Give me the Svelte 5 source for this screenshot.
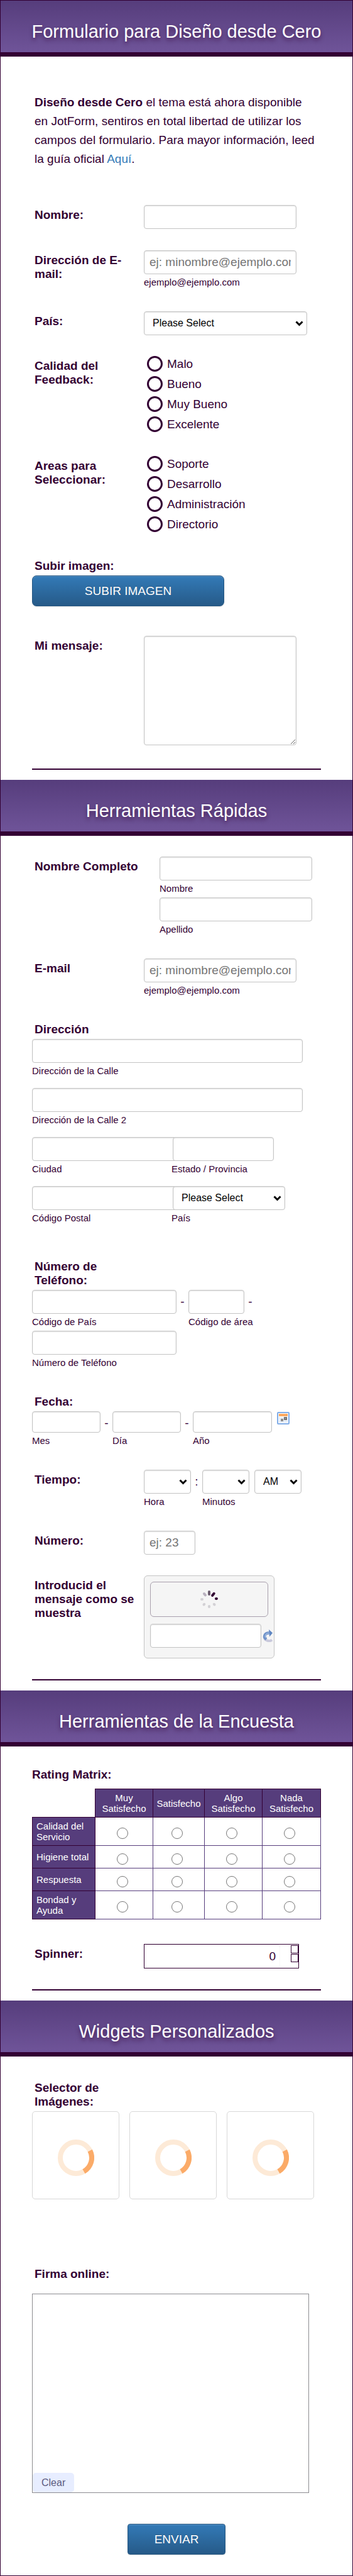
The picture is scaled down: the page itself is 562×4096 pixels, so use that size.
<script>
  const feedback = ['Malo', 'Bueno', 'Muy Bueno', 'Excelente'];
  const areas = ['Soporte', 'Desarrollo', 'Administración', 'Directorio'];
  const ratings = ['Muy Satisfecho', 'Satisfecho', 'Algo Satisfecho', 'Nada Satisfecho'];
  const services = ['Calidad del Servicio', 'Higiene total', 'Respuesta', 'Bondad y Ayuda'];
  const images = [1, 2, 3];
  const petals = [
    { angle: 0, color: '#6b5c6e', length: 8 },
    { angle: 40, color: '#330033', length: 8 },
    { angle: 85, color: '#330033', length: 5 },
    { angle: 135, color: '#d3d1d5', length: 5 },
    { angle: 180, color: '#d3d1d5', length: 5 },
    { angle: 225, color: '#d3d1d5', length: 5 },
    { angle: 270, color: '#d3d1d5', length: 5 },
    { angle: 318, color: '#b9b1bf', length: 7 }
  ];
  let spinner = $state(0);
</script>

<form class="form" onsubmit={(e) => e.preventDefault()}>
  <header class="banner"><h1>Formulario para Diseño desde Cero</h1></header>
  <section class="body">
    <p class="intro">
      <strong>Diseño desde Cero</strong> el tema está ahora disponible en JotForm, sentiros en total
      libertad de utilizar los campos del formulario. Para mayor información, leed la guía oficial
      <a href="#guia">Aquí</a>.
    </p>

    <div class="row first">
      <label class="label" for="nombre">Nombre:</label>
      <input class="box text" id="nombre" type="text" />
    </div>

    <div class="row near">
      <label class="label" for="email">Dirección de E-mail:</label>
      <div>
        <input class="box text" id="email" type="email" placeholder="ej: minombre@ejemplo.com" />
        <span class="sub">ejemplo@ejemplo.com</span>
      </div>
    </div>

    <div class="row">
      <label class="label" for="pais">País:</label>
      <select class="box country" id="pais"><option>Please Select</option></select>
    </div>

    <div class="row tight" role="radiogroup" aria-labelledby="calidad">
      <span class="label" id="calidad">Calidad del Feedback:</span>
      <div class="options">
        {#each feedback as option}
          <label><input class="ring" type="radio" name="calidad" value={option} />{option}</label>
        {/each}
      </div>
    </div>

    <div class="row" role="radiogroup" aria-labelledby="areas">
      <span class="label" id="areas">Areas para Seleccionar:</span>
      <div class="options">
        {#each areas as option}
          <label><input class="ring" type="radio" name="areas" value={option} />{option}</label>
        {/each}
      </div>
    </div>

    <div class="stack">
      <span class="label" id="subir">Subir imagen:</span>
      <button class="button upload" type="button" aria-describedby="subir">SUBIR IMAGEN</button>
    </div>

    <div class="row far">
      <label class="label" for="mensaje">Mi mensaje:</label>
      <textarea class="box message" id="mensaje"></textarea>
    </div>
    <hr />
  </section>

  <header class="banner"><h2>Herramientas Rápidas</h2></header>
  <section class="body">
    <div class="row tight" role="group" aria-labelledby="completo">
      <span class="label wide" id="completo">Nombre Completo</span>
      <div class="column indented">
        <div>
          <input class="box text" id="first" type="text" />
          <label class="sub" for="first">Nombre</label>
        </div>
        <div>
          <input class="box text" id="last" type="text" />
          <label class="sub" for="last">Apellido</label>
        </div>
      </div>
    </div>

    <div class="row">
      <label class="label" for="email2">E-mail</label>
      <div>
        <input class="box text" id="email2" type="email" placeholder="ej: minombre@ejemplo.com" />
        <span class="sub">ejemplo@ejemplo.com</span>
      </div>
    </div>

    <div class="stack" role="group" aria-labelledby="direccion">
      <span class="label" id="direccion">Dirección</span>
      <div class="address">
        <div class="street">
          <input class="box full" id="calle" type="text" />
          <label class="sub" for="calle">Dirección de la Calle</label>
        </div>
        <div class="street">
          <input class="box full" id="calle2" type="text" />
          <label class="sub" for="calle2">Dirección de la Calle 2</label>
        </div>
        <div class="pair">
          <div>
            <input class="box under" id="ciudad" type="text" />
            <label class="sub" for="ciudad">Ciudad</label>
          </div>
          <div>
            <input class="box over state" id="estado" type="text" />
            <label class="sub" for="estado">Estado / Provincia</label>
          </div>
        </div>
        <div class="pair">
          <div>
            <input class="box under" id="postal" type="text" />
            <label class="sub" for="postal">Código Postal</label>
          </div>
          <div>
            <select class="box over nation" id="pais2"><option>Please Select</option></select>
            <label class="sub" for="pais2">País</label>
          </div>
        </div>
      </div>
    </div>

    <div class="stack apart" role="group" aria-labelledby="telefono">
      <span class="label" id="telefono">Número de Teléfono:</span>
      <div class="column">
        <div class="parts">
          <div class="phone">
            <input class="box full" id="tel-pais" type="tel" />
            <label class="sub" for="tel-pais">Código de País</label>
          </div>
          <span class="sep">-</span>
          <div class="area">
            <input class="box full" id="tel-area" type="tel" />
            <label class="sub" for="tel-area">Código de área</label>
          </div>
          <span class="sep">-</span>
        </div>
        <div class="phone">
          <input class="box full" id="tel-num" type="tel" />
          <label class="sub" for="tel-num">Número de Teléfono</label>
        </div>
      </div>
    </div>

    <div class="stack" role="group" aria-labelledby="fecha">
      <span class="label" id="fecha">Fecha:</span>
      <div class="parts date">
        <div class="day">
          <input class="box full" id="mes" type="text" />
          <label class="sub" for="mes">Mes</label>
        </div>
        <span class="sep">-</span>
        <div class="day">
          <input class="box full" id="dia" type="text" />
          <label class="sub" for="dia">Día</label>
        </div>
        <span class="sep">-</span>
        <div class="year">
          <input class="box full" id="ano" type="text" />
          <label class="sub" for="ano">Año</label>
        </div>
        <button class="icon calendar" type="button" aria-label="Calendario">
          <svg viewBox="0 0 20 20" width="20" height="20">
            <rect x="1" y="1" width="18" height="18" rx="1" fill="#fff" stroke="#82aee8" stroke-width="2" />
            <path d="M4 8v9M7 8v9M10 8v9M13 8v9M16 8v9M3 10h14M3 13h14M3 16h14" stroke="#d5e2f3" />
            <rect x="3" y="3" width="14" height="4" fill="#fba85f" />
            <rect x="6" y="11" width="4" height="4" fill="#8d8d8d" />
            <rect x="11" y="8" width="5" height="5" fill="#777" />
            <rect x="13" y="10" width="1" height="1" fill="#bbb" />
          </svg>
        </button>
      </div>
    </div>

    <div class="row" role="group" aria-labelledby="tiempo">
      <span class="label" id="tiempo">Tiempo:</span>
      <div class="parts">
        <div class="clock">
          <select class="box full" id="hora"><option></option></select>
          <label class="sub" for="hora">Hora</label>
        </div>
        <span class="sep colon">:</span>
        <div class="clock">
          <select class="box full" id="minutos"><option></option></select>
          <label class="sub" for="minutos">Minutos</label>
        </div>
        <div class="clock half">
          <select class="box full" aria-label="AM o PM"><option>AM</option><option>PM</option></select>
        </div>
      </div>
    </div>

    <div class="row">
      <label class="label" for="numero">Número:</label>
      <input class="box number" id="numero" type="text" placeholder="ej: 23" />
    </div>

    <div class="row tight">
      <label class="label" for="captcha">Introducid el mensaje como se muestra</label>
      <div class="captcha">
        <div class="challenge">
          <svg viewBox="-15 -15 30 30" width="30" height="30" aria-hidden="true">
            {#each petals as p}
              <rect x="-2" y="-14" width="4" height={p.length} rx="2" fill={p.color} transform="rotate({p.angle})" />
            {/each}
          </svg>
        </div>
        <div class="answer">
          <input class="box" id="captcha" type="text" />
          <button class="icon" type="button" aria-label="Recargar">
            <svg viewBox="0 0 16 20" width="16" height="20">
              <path d="M15 16.500C11 20 3 18 2.500 11" fill="none" stroke="#c9c9dc" stroke-width="4" />
              <path d="M6 15.500C1 12 3 5.500 10.500 5.500" fill="none" stroke="#6f93c9" stroke-width="4.500" />
              <path d="M5 13C3 10 5 6 10.500 5.500" fill="none" stroke="#9db8e2" stroke-width="1.500" />
              <path d="M10 0l6 5.500-5 6z" fill="#5f86c2" />
            </svg>
          </button>
        </div>
      </div>
    </div>
    <hr class="close" />
  </section>

  <header class="banner"><h2>Herramientas de la Encuesta</h2></header>
  <section class="body">
    <div class="matrix">
      <span class="title" id="matrix">Rating Matrix:</span>
      <table aria-labelledby="matrix">
        <colgroup><col class="c0" /><col class="c1" /><col class="c2" /><col class="c1" /><col /></colgroup>
        <thead>
          <tr>
            <td class="blank"></td>
            {#each ratings as rating}<th scope="col">{rating}</th>{/each}
          </tr>
        </thead>
        <tbody>
          {#each services as service, i}
            <tr class:short={i === 1 || i === 2}>
              <th scope="row">{service}</th>
              {#each ratings as rating}
                <td><input class="dot" type="radio" name="servicio-{i}" value={rating} aria-label="{service}: {rating}" /></td>
              {/each}
            </tr>
          {/each}
        </tbody>
      </table>
    </div>

    <div class="row">
      <label class="label" for="spinner">Spinner:</label>
      <div class="spinner">
        <input id="spinner" type="text" bind:value={spinner} />
        <div class="steps">
          <button type="button" aria-label="Aumentar" onclick={() => (spinner = Number(spinner) + 1)}></button>
          <button type="button" aria-label="Disminuir" onclick={() => (spinner = Number(spinner) - 1)}></button>
        </div>
      </div>
    </div>
    <hr class="close" />
  </section>

  <header class="banner"><h2>Widgets Personalizados</h2></header>
  <section class="body">
    <div class="stack images">
      <span class="label" id="selector">Selector de Imágenes:</span>
      <div class="tiles" role="group" aria-labelledby="selector">
        {#each images as n}
          <button class="tile" type="button" aria-label="Imagen {n}">
            <svg viewBox="-29 -29 58 58" width="58" height="58">
              <circle r="25" fill="none" stroke="#fdead7" stroke-width="8" />
              <path d="M22.300 -11.400A25 25 0 0 1 12.500 21.700" fill="none" stroke="#fbab68" stroke-width="8" />
            </svg>
          </button>
        {/each}
      </div>
    </div>

    <div class="signature">
      <span class="label" id="firma">Firma online:</span>
      <div class="pad" role="group" aria-labelledby="firma">
        <button class="clear" type="button">Clear</button>
      </div>
    </div>

    <div class="submit"><button class="button send" type="submit">ENVIAR</button></div>
  </section>
</form>

<style>
  :global(body) {
    margin: 0;
    background: #fff;
  }
  .form,
  .form :global(*) {
    box-sizing: border-box;
  }
  .form {
    border: 1px solid #330033;
    padding-bottom: 33px;
    color: #330033;
    background: #fff;
    font: 19px/22px 'Liberation Sans', Arial, sans-serif;
  }
  input,
  select,
  textarea,
  button {
    font: inherit;
    color: inherit;
    margin: 0;
  }
  .banner {
    padding: 32px 20px 16px;
    border-bottom: 7px solid #330033;
    background: linear-gradient(#563d7c, #6f5499);
    color: #fff;
    text-align: center;
  }
  h1,
  h2 {
    margin: 0;
    font-size: 29px;
    line-height: 34px;
    font-weight: 400;
    text-shadow: 0 4px 6px rgba(51, 0, 51, 0.6);
  }
  .body {
    display: flow-root;
    padding: 0 50px;
  }
  .intro {
    margin: 58px 0 0;
    padding: 0 8px 0 4px;
    line-height: 30px;
  }
  a {
    color: #337ab7;
    text-decoration: none;
  }

  .row {
    display: grid;
    grid-template-columns: 178px 1fr;
    align-items: start;
    margin-top: 38px;
  }
  .row.first {
    margin-top: 58px;
  }
  .row.near {
    margin-top: 34px;
  }
  .row.tight {
    margin-top: 33px;
  }
  .row.far {
    margin-top: 47px;
  }
  .label {
    display: block;
    width: 172px;
    padding-left: 4px;
    font-weight: 700;
  }
  .label.wide {
    width: 200px;
  }
  .row > .label {
    margin-top: 5px;
  }
  .stack {
    display: flex;
    flex-direction: column;
    align-items: flex-start;
    gap: 4px;
    margin-top: 43px;
  }
  .stack.apart {
    margin-top: 58px;
  }
  .stack.images {
    margin-top: 39px;
  }
  .column {
    display: grid;
    gap: 6px;
  }
  .indented {
    padding-left: 25px;
  }

  .box {
    display: block;
    height: 38px;
    padding: 0 8px;
    border: 1px solid #c4c4c4;
    border-radius: 4px;
    background-color: #fff;
    box-shadow: inset 0 1px 2px rgba(0, 0, 0, 0.12);
    outline: 0;
  }
  .box::placeholder {
    color: #757575;
    opacity: 1;
  }
  .text {
    width: 243px;
  }
  .full {
    width: 100%;
  }
  select.box {
    appearance: none;
    padding: 0 24px 0 13px;
    color: #000;
    font-size: 16px;
    background: #fff
      url("data:image/svg+xml,%3Csvg xmlns='http://www.w3.org/2000/svg' width='13' height='9' viewBox='0 0 13 9'%3E%3Cpath d='M1.500 1.500l5 5 5-5' fill='none' stroke='%23000' stroke-width='3'/%3E%3C/svg%3E")
      no-repeat right 5px center;
  }
  .country {
    width: 260px;
  }
  .message {
    width: 243px;
    height: 174px;
    resize: both;
  }
  .number {
    width: 82px;
  }
  .sub {
    display: block;
    margin-top: 4px;
    font-size: 15px;
    line-height: 17px;
    white-space: nowrap;
  }

  .options {
    display: grid;
    justify-items: start;
    gap: 7px;
    padding-left: 5px;
  }
  .options label {
    display: flex;
    align-items: center;
    gap: 7px;
    height: 25px;
  }
  .ring {
    appearance: none;
    width: 25px;
    height: 25px;
    border: 3px solid #330033;
    border-radius: 50%;
    background: #fff;
  }
  .ring:checked,
  .dot:checked {
    background: radial-gradient(#330033 40%, #fff 45%);
  }

  .button {
    height: 49px;
    border: 1px solid #245580;
    border-radius: 4px;
    background: linear-gradient(#337ab7, #265a88);
    box-shadow:
      inset 0 1px 0 rgba(255, 255, 255, 0.2),
      0 1px 1px rgba(0, 0, 0, 0.1);
    color: #fff;
    text-shadow: 0 -1px 0 rgba(0, 0, 0, 0.2);
  }
  .upload {
    width: 306px;
    border-radius: 7px;
  }
  .send {
    width: 156px;
  }
  .submit {
    display: flex;
    justify-content: center;
    margin-top: 49px;
  }
  hr {
    height: 2px;
    margin: 37px 0 16px;
    border: 0;
    background: #330033;
  }
  hr.close {
    margin-top: 33px;
  }

  .address {
    display: grid;
    gap: 19px;
    width: 100%;
  }
  .street {
    max-width: 431px;
  }
  .pair {
    display: grid;
    grid-template-columns: 222px 1fr;
  }
  .under {
    width: 240px;
  }
  .over {
    margin-left: 2px;
  }
  .state {
    width: 161px;
  }
  .nation {
    width: 179px;
  }

  .parts {
    display: flex;
    align-items: flex-start;
  }
  .sep {
    width: 19px;
    line-height: 38px;
    text-align: center;
  }
  .sep.colon {
    width: 18px;
  }
  .phone {
    width: 230px;
  }
  .area {
    width: 89px;
  }
  .date .box {
    height: 34px;
  }
  .day {
    width: 109px;
  }
  .year {
    width: 126px;
  }
  .clock {
    width: 75px;
  }
  .half {
    margin-left: 8px;
  }
  .icon {
    display: block;
    padding: 0;
    border: 0;
    background: none;
  }
  .icon svg {
    display: block;
  }
  .calendar {
    margin: 1px 0 0 8px;
  }

  .captcha {
    width: 208px;
    padding: 9px 2px 16px 9px;
    border: 1px solid #c4c4c4;
    border-radius: 6px;
    background: #f5f5f5;
  }
  .challenge {
    display: flex;
    justify-content: center;
    align-items: center;
    height: 56px;
    margin-right: 7px;
    border: 1px solid #a9a0ad;
    border-radius: 6px;
  }
  .answer {
    display: flex;
    align-items: center;
    gap: 2px;
    margin-top: 11px;
  }
  .answer .box {
    flex: 1;
    min-width: 0;
  }

  .matrix {
    display: grid;
    gap: 11px;
    margin-top: 34px;
  }
  .title {
    font-weight: 700;
  }
  table {
    width: 100%;
    table-layout: fixed;
    border-collapse: collapse;
    font-size: 15px;
    line-height: 17px;
  }
  .c0 {
    width: 100px;
  }
  .c1 {
    width: 92px;
  }
  .c2 {
    width: 82px;
  }
  tr {
    height: 45px;
  }
  tr.short {
    height: 36px;
  }
  td,
  th {
    padding: 0 4px;
    border: 1px solid #563d7c;
    text-align: center;
    font-weight: 400;
  }
  th {
    border-color: #330033;
    background: #563d7c;
    color: #fff;
  }
  tbody th {
    padding: 0 6px;
    text-align: left;
  }
  .blank {
    border-width: 0;
  }
  .dot {
    appearance: none;
    display: block;
    width: 18px;
    height: 18px;
    margin: 6px auto 0;
    border: 1px solid #767676;
    border-radius: 50%;
    background: #fff;
  }
  td .dot {
    translate: -3px;
  }
  .matrix + .row {
    margin-top: 39px;
  }

  .spinner {
    display: flex;
    width: 247px;
    height: 39px;
    border: 1px solid #330033;
  }
  .spinner input {
    width: 216px;
    padding: 0 7px;
    border: 0;
    border-radius: 4px;
    background: #fff;
    box-shadow: inset 0 1px 2px rgba(0, 0, 0, 0.1);
    outline: 0;
    text-align: right;
  }
  .steps {
    display: flex;
    flex-direction: column;
    gap: 1px;
    margin: 1px 0 0 auto;
  }
  .steps button {
    width: 12px;
    height: 13px;
    padding: 0;
    border: 1px solid #330033;
    background: #fff;
  }

  .tiles {
    display: flex;
    gap: 16px;
  }
  .tile {
    display: flex;
    justify-content: center;
    align-items: center;
    width: 139px;
    height: 140px;
    padding: 8px 0 0;
    border: 1px solid #d8d8d8;
    border-radius: 5px;
    background: #fff;
  }
  .signature {
    display: grid;
    gap: 20px;
    margin-top: 108px;
  }
  .pad {
    display: flex;
    align-items: flex-end;
    max-width: 441px;
    height: 317px;
    border: 1px solid #8c8c90;
  }
  .clear {
    height: 31px;
    padding: 0 14px;
    border: 0;
    border-radius: 5px;
    background: #e7edff;
    color: #5c5a80;
    font-size: 16px;
  }
</style>
